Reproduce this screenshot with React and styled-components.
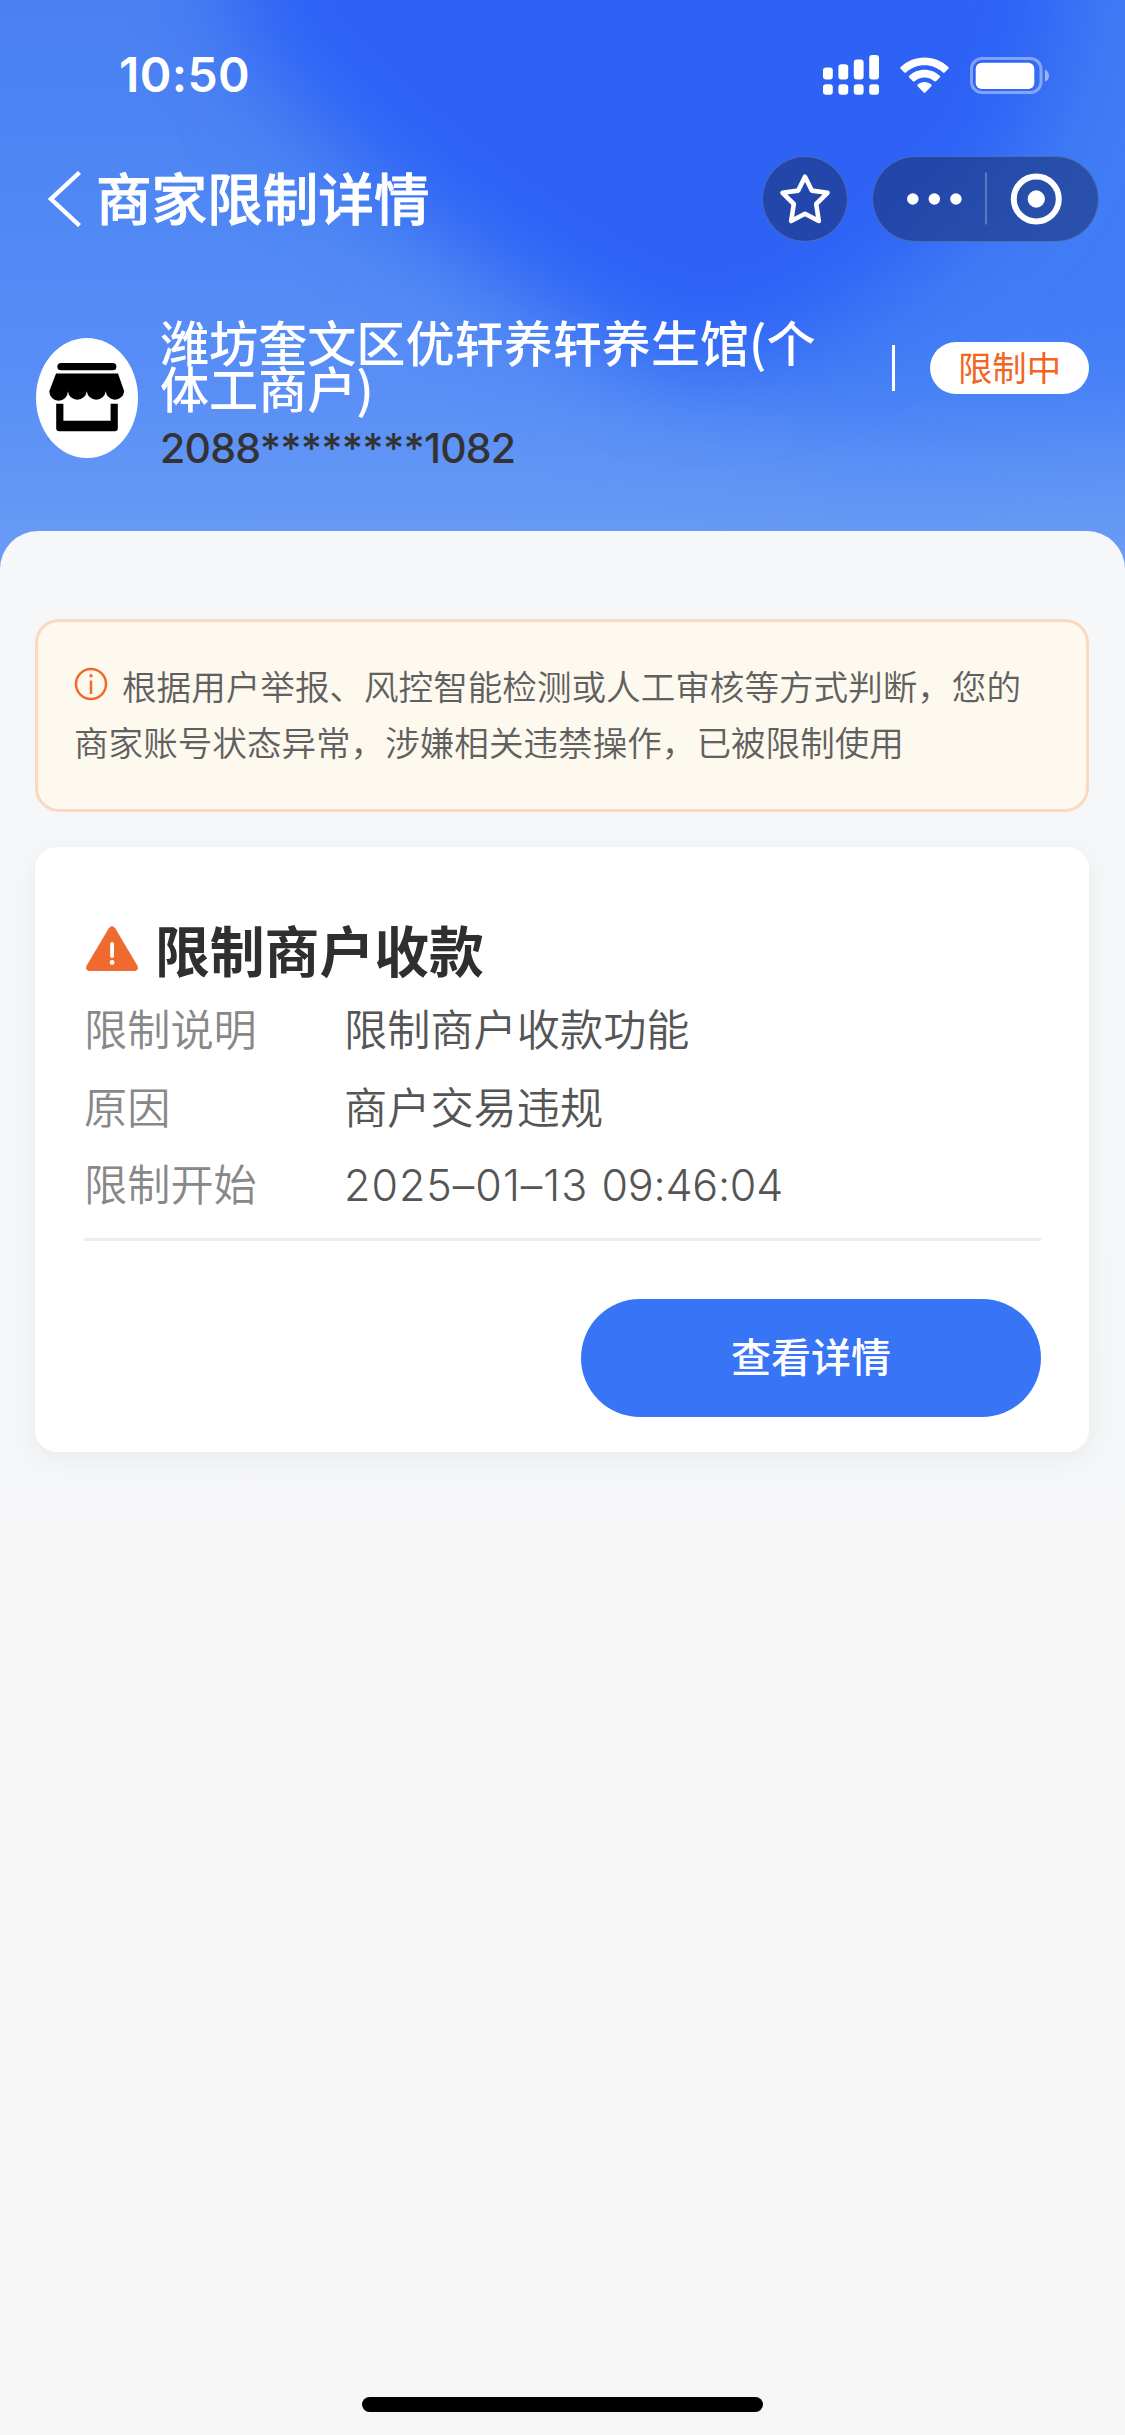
import React from "react";
import styled, { createGlobalStyle } from "styled-components";

const cjk = '"Noto Sans CJK SC", sans-serif';
const latin = 'Inter, "Noto Sans CJK SC", sans-serif';

const GlobalStyle = createGlobalStyle`
  * { box-sizing: border-box; }
  body { margin: 0; background: #f7f7f7; font-family: ${cjk}; }
  h1, h2, p, dl, dt, dd { margin: 0; font-weight: inherit; }
  svg { display: block; }
`;

const Page = styled.div`
  display: flex;
  flex-direction: column;
  width: 1125px;
  height: 2435px;
  overflow: hidden;
  background: #f7f7f7;
`;

const Header = styled.header`
  position: relative;
  isolation: isolate;
  overflow: hidden;
  flex: none;
  height: 575px;
  background: linear-gradient(180deg, #4a80f2 0, #4f87f4 200px, #588ef6 380px, #6799f5 530px, #6a9bf6 100%);
`;

const Glow = styled.div`
  position: absolute;
  inset: -150px;
  z-index: -1;
  filter: blur(${(p) => p.$blur}px);
  &::before {
    content: "";
    display: block;
    height: 100%;
    background: ${(p) => p.$color};
    clip-path: polygon(${(p) => p.$shape});
  }
`;

const StatusBar = styled.div`
  display: flex;
  align-items: center;
  justify-content: space-between;
  height: 156px;
  padding: 0 76px 6px 119px;
`;

const Time = styled.span`
  font: 600 48px/60px ${latin};
  letter-spacing: 0.4px;
  color: #fff;
`;

const StatusIcons = styled.div`
  display: flex;
  align-items: center;
  gap: 21px;
`;

const NavBar = styled.nav`
  display: flex;
  align-items: center;
  justify-content: space-between;
  height: 86px;
  padding: 0 26px 0 48px;
`;

const NavTitle = styled.div`
  display: flex;
  align-items: center;
  gap: 14px;
`;

const Title = styled.h1`
  font-size: 55.6px;
  line-height: 80px;
  font-weight: 500;
  -webkit-text-stroke: 0.8px #fff;
  color: #fff;
  margin-top: -7px;
`;

const NavActions = styled.div`
  display: flex;
  gap: 24px;
`;

const Pill = styled.div`
  display: flex;
  align-items: center;
  justify-content: center;
  width: ${(p) => p.$width}px;
  height: 86px;
  border-radius: 43px;
  background: rgba(27, 53, 125, 0.62);
  border: 1px solid rgba(130, 160, 210, 0.4);
`;

const Merchant = styled.section`
  display: flex;
  align-items: flex-start;
  padding: 76px 36px 0 36px;
`;

const Avatar = styled.div`
  display: flex;
  align-items: center;
  justify-content: center;
  width: 102px;
  height: 120px;
  margin: 20px 22px 0 0;
  border-radius: 50%;
  background: #fff;
`;

const MerchantInfo = styled.div`
  width: 690px;
`;

const MerchantName = styled.p`
  font-size: 49.1px;
  line-height: 46px;
  font-weight: 500;
  color: #fff;
`;

const Account = styled.p`
  margin-top: 13px;
  font: 450 41px/50px ${latin};
  letter-spacing: -0.8px;
  color: #333;
`;

const Status = styled.div`
  display: flex;
  align-items: center;
  margin: 24px 0 0 auto;
  gap: 35px;
`;

const StatusDivider = styled.i`
  width: 3px;
  height: 46px;
  background: #fff;
`;

const Badge = styled.span`
  width: 159px;
  height: 52px;
  border-radius: 26px;
  background: #fff;
  color: #f26522;
  font-size: 34.4px;
  line-height: 48px;
  text-align: center;
`;

const Sheet = styled.main`
  position: relative;
  z-index: 1;
  display: flex;
  flex-direction: column;
  flex: 1;
  margin-top: -44px;
  padding: 88px 36px 23px 35px;
  border-radius: 38px 38px 0 0;
  background: linear-gradient(180deg, #f5f7f8 0, #f5f6f8 900px, #f7f7f7 1100px);
`;

const Notice = styled.p`
  flex: none;
  height: 193px;
  padding: 35px 36px;
  border: 3px solid #fbd9c0;
  border-radius: 24px;
  background: #fdf9ee;
  color: #606060;
  font-size: 34.6px;
  font-weight: 350;
  line-height: 56px;
  white-space: nowrap;
`;

const InfoIcon = styled.svg`
  && { display: inline-block; }
  margin-right: 14px;
  vertical-align: -1px;
`;

const Card = styled.section`
  flex: none;
  height: 605px;
  margin-top: 35px;
  padding: 69px 48px 0 49px;
  border-radius: 22px;
  background: #fff;
  box-shadow: 0 6px 24px rgba(0, 0, 0, 0.05);
`;

const CardHeading = styled.div`
  display: flex;
  align-items: center;
  height: 66px;
  gap: 17px;
  padding-left: 2px;
`;

const CardTitle = styled.h2`
  margin-top: -2px;
  font-size: 54.8px;
  line-height: 66px;
  font-weight: 700;
  color: #2f2f2f;
`;

const Details = styled.dl`
  display: grid;
  grid-template-columns: 260px 1fr;
  grid-auto-rows: 77.5px;
  padding: 7px 0 16px;
  border-bottom: 3px solid #ededed;
  font-size: 43.2px;
  line-height: 77.5px;
`;

const Label = styled.dt`
  color: #888;
  font-weight: 350;
`;

const Value = styled.dd`
  color: #555;
  font-weight: 350;
`;

const DateValue = styled(Value)`
  padding-top: 3px;
  font-family: ${latin};
  font-size: 43px;
  letter-spacing: 1px;
`;

const Clock = styled.span`
  letter-spacing: -0.2px;
`;

const Actions = styled.div`
  display: flex;
  justify-content: flex-end;
  margin-top: 58px;
`;

const PrimaryButton = styled.button`
  width: 460px;
  height: 118px;
  padding: 0 0 5px;
  border: 0;
  border-radius: 59px;
  background: #3874f6;
  color: #fff;
  font: 500 40px/60px ${cjk};
`;

const HomeIndicator = styled.div`
  width: 401px;
  height: 15px;
  margin: auto auto 0;
  border-radius: 8px;
  background: #000;
`;

const bars = [12, 15.3, 20, 24.6];

function SignalIcon() {
  return (
    <svg width="56" height="40" viewBox="0 0 56 40" fill="#fff">
      {bars.map((h, i) => (
        <g key={h}>
          <rect x={i * 15.4} y={24.6 - h} width="9.8" height={h} rx="3" />
          <rect x={i * 15.4} y="29.2" width="9.8" height="10.6" rx="3" />
        </g>
      ))}
    </svg>
  );
}

function WifiIcon() {
  return (
    <svg width="49" height="37" viewBox="0 0 49 37" fill="#fff">
      <path d="M24.5 0.5C33.8 0.5 42.2 4.1 48.3 10q.9.9 0 1.8L44.6 15.4q-.9.8-1.7 0C38.1 10.9 31.6 8.2 24.5 8.2S10.9 10.9 6.1 15.4q-.9.8-1.7 0L.7 11.8q-.9-.9 0-1.8C6.8 4.1 15.2.5 24.5.5z" />
      <path d="M24.5 12.7c5.9 0 11.3 2.3 15.3 6q.9.9 0 1.8l-3.8 3.7q-.9.8-1.7 0c-2.6-2.3-6-3.7-9.8-3.7s-7.2 1.4-9.8 3.7q-.9.8-1.7 0l-3.8-3.7q-.9-.9 0-1.8c4-3.7 9.4-6 15.3-6z" />
      <path d="M24.5 24.9c2.6 0 5 1 6.8 2.6q.9.9 0 1.8l-5.9 6.1q-.9.8-1.8 0l-5.9-6.1q-.9-.9 0-1.8c1.8-1.6 4.2-2.6 6.8-2.6z" />
    </svg>
  );
}

function BatteryIcon() {
  return (
    <svg width="79" height="37" viewBox="0 0 79 37">
      <rect x="1.5" y="1.5" width="69.5" height="34" rx="10.5" fill="none" stroke="#fff" strokeOpacity=".4" strokeWidth="3" />
      <rect x="5.7" y="5.7" width="58.6" height="26.3" rx="6" fill="#fff" />
      <path d="M75 12.7c5.3 2 5.3 10 0 12z" fill="#fff" fillOpacity=".5" />
    </svg>
  );
}

function BackIcon() {
  return (
    <svg width="34" height="56" viewBox="0 0 34 56" fill="none" stroke="#fff" strokeWidth="4.4">
      <path d="M31.5 1.5 3 28l28.5 26.5" />
    </svg>
  );
}

function StarIcon() {
  return (
    <svg width="54" height="54" viewBox="0 0 54 54" fill="none" stroke="#fff" strokeWidth="4.6" strokeLinejoin="round">
      <path d="M27 4.7 33.8 18.6 49.5 20.8 38.200 32 40.800 49 27 41.800 13.200 49 15.800 32 4.500 20.800 20.200 18.600z" />
    </svg>
  );
}

function CapsuleIcons() {
  return (
    <svg width="226" height="86" viewBox="0 0 226 86" fill="#fff">
      <circle cx="40" cy="43" r="5.8" />
      <circle cx="61.6" cy="43" r="5.8" />
      <circle cx="83.3" cy="43" r="5.8" />
      <rect x="113" y="16.5" width="1" height="52" fillOpacity=".5" />
      <circle cx="164" cy="43" r="22.6" fill="none" stroke="#fff" strokeWidth="6" />
      <circle cx="164" cy="43" r="8.7" />
    </svg>
  );
}

function StoreIcon() {
  return (
    <svg width="76" height="70" viewBox="0 0 76 70">
      <rect x="8.4" y="0" width="59" height="7.3" rx="3.6" />
      <path d="M7 10.5H69L75.2 28.3A9.3 9.4 0 0 1 56.700 28.300 9.500 9.400 0 0 1 37.800 28.300 9.500 9.400 0 0 1 18.900 28.300 9.300 9.400 0 0 1 .3 28.300z" />
      <path d="M7.200 40.700h7.200v17h47.200v-17h7.200v24.600q0 3-3 3H10.200q-3 0-3-3z" />
    </svg>
  );
}

function WarningIcon() {
  return (
    <svg width="52" height="46" viewBox="0 0 52 46">
      <path d="M22.8 2.2q3.2-4 6.4 0L51.3 39.5q2 5-3 5.5H3.7q-5-.5-3-5.5z" fill="#ee6a2e" />
      <rect x="24.2" y="16" width="3.8" height="16" rx="1.9" fill="#fff" />
      <circle cx="26.1" cy="36.5" r="2.4" fill="#fff" />
    </svg>
  );
}

const details = [
  ["限制说明", "限制商户收款功能"],
  ["原因", "商户交易违规"],
];

export default function App() {
  return (
    <Page>
      <GlobalStyle />
      <Header>
        <Glow $blur={55} $color="#417df6" $shape="430px 0, 1425px 0, 1425px 550px, 1000px 575px, 780px 510px, 620px 390px, 450px 250px" />
        <Glow $blur={46} $color="#2d62f5" $shape="365px 0, 1220px 0, 1220px 180px, 1160px 330px, 1040px 430px, 930px 500px, 830px 515px, 690px 440px, 560px 350px, 450px 250px, 390px 180px" />
        <StatusBar>
          <Time>10:50</Time>
          <StatusIcons>
            <SignalIcon />
            <WifiIcon />
            <BatteryIcon />
          </StatusIcons>
        </StatusBar>
        <NavBar>
          <NavTitle>
            <BackIcon />
            <Title>商家限制详情</Title>
          </NavTitle>
          <NavActions>
            <Pill $width={86}>
              <StarIcon />
            </Pill>
            <Pill $width={227}>
              <CapsuleIcons />
            </Pill>
          </NavActions>
        </NavBar>
        <Merchant>
          <Avatar>
            <StoreIcon />
          </Avatar>
          <MerchantInfo>
            <MerchantName>潍坊奎文区优轩养轩养生馆(个体工商户)</MerchantName>
            <Account>2088********1082</Account>
          </MerchantInfo>
          <Status>
            <StatusDivider />
            <Badge>限制中</Badge>
          </Status>
        </Merchant>
      </Header>
      <Sheet>
        <Notice>
          <InfoIcon width="34" height="34" viewBox="0 0 34 34" fill="none" stroke="#f5692c" strokeWidth="2.5">
            <circle cx="17" cy="17" r="15" />
            <path d="M17 13.5v13.5" />
            <circle cx="17" cy="8.8" r="1.7" fill="#f5692c" stroke="none" />
          </InfoIcon>
          根据用户举报、风控智能检测或人工审核等方式判断，您的
          <br />
          商家账号状态异常，涉嫌相关违禁操作，已被限制使用
        </Notice>
        <Card>
          <CardHeading>
            <WarningIcon />
            <CardTitle>限制商户收款</CardTitle>
          </CardHeading>
          <Details>
            {details.map(([label, value]) => (
              <React.Fragment key={label}>
                <Label>{label}</Label>
                <Value>{value}</Value>
              </React.Fragment>
            ))}
            <Label>限制开始</Label>
            <DateValue>
              2025–01–13 <Clock>09:46:04</Clock>
            </DateValue>
          </Details>
          <Actions>
            <PrimaryButton>查看详情</PrimaryButton>
          </Actions>
        </Card>
        <HomeIndicator />
      </Sheet>
    </Page>
  );
}
